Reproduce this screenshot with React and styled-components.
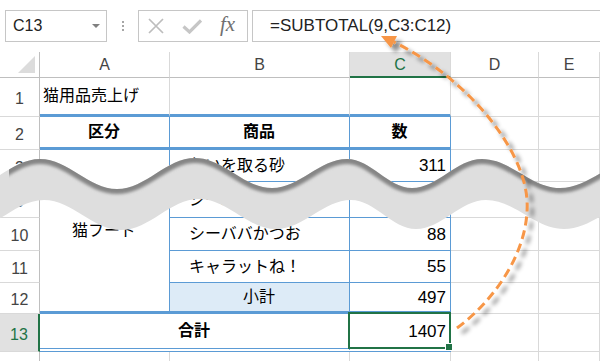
import React from 'react';
import styled, { createGlobalStyle } from 'styled-components';

const Global = createGlobalStyle`
  html, body { margin: 0; padding: 0; background: #fff; }
  body { font-family: "Liberation Sans", "Noto Sans CJK JP", sans-serif; }
`;

const BLUE = '#5b9bd5';
const GRID = '#d9d9d9';
const HEAD_LINE = '#bfbfbf';
const GREEN = '#217346';

const Page = styled.div`
  position: relative;
  width: 600px;
  height: 361px;
  overflow: hidden;
  background: #fff;
`;

const FormulaBar = styled.div`
  display: flex;
  align-items: flex-start;
  height: 52px;
  padding: 10px 0 0 5px;
  box-sizing: border-box;
`;

const NameBox = styled.div`
  display: flex;
  align-items: center;
  width: 102px;
  height: 32px;
  box-sizing: border-box;
  border: 1px solid #c6c6c6;
  padding: 0 6px 0 7px;
  font-size: 16px;
  color: #222;
`;

const DropArrow = styled.span`
  margin-left: auto;
  width: 0;
  height: 0;
  border-left: 4px solid transparent;
  border-right: 4px solid transparent;
  border-top: 4px solid #808080;
`;

const Dots = styled.div`
  width: 31px;
  height: 32px;
  display: flex;
  flex-direction: column;
  align-items: center;
  justify-content: center;
  gap: 2px;
`;

const Dot = styled.span`
  width: 2px;
  height: 2px;
  background: #a6a6a6;
`;

const ButtonBox = styled.div`
  display: flex;
  align-items: center;
  gap: 18px;
  width: 110px;
  height: 32px;
  box-sizing: border-box;
  border: 1px solid #c6c6c6;
  padding-left: 9px;
`;

const Fx = styled.span`
  font-family: "Liberation Serif", serif;
  font-style: italic;
  font-size: 21px;
  color: #707070;
  line-height: 1;
  margin-top: -3px;
`;

const FormulaInput = styled.div`
  flex: 1;
  display: flex;
  align-items: center;
  margin-left: 4px;
  height: 32px;
  box-sizing: border-box;
  border: 1px solid #c6c6c6;
  border-right: none;
  padding-left: 17px;
  font-size: 17px;
  color: #222;
  white-space: nowrap;
`;

const Sheet = styled.div`
  display: grid;
  grid-template-columns: 40px 130px 180px 101px 88px 1fr;
  grid-template-rows: 26px 39px 33px 32px 36px 33px 32px 31px 38px 30px;
`;

const Corner = styled.div`
  position: relative;
  box-sizing: border-box;
  border-right: 1px solid ${HEAD_LINE};
  border-bottom: 1px solid ${HEAD_LINE};
  &::after {
    content: '';
    position: absolute;
    right: 4px;
    bottom: 4px;
    width: 17px;
    height: 17px;
    background: #dcdcdc;
    clip-path: polygon(100% 0, 100% 100%, 0 100%);
  }
`;

const ColHead = styled.div`
  display: flex;
  align-items: center;
  justify-content: center;
  box-sizing: border-box;
  font-size: 16px;
  color: ${p => (p.$sel ? GREEN : '#444')};
  background: ${p => (p.$sel ? '#e1e1e1' : '#fff')};
  border-right: 1px solid ${GRID};
  border-bottom: ${p => (p.$sel ? `2px solid ${GREEN}` : `1px solid ${HEAD_LINE}`)};
  padding-top: ${p => (p.$sel ? '1px' : '0')};
`;

const RowHead = styled.div`
  display: flex;
  align-items: center;
  justify-content: center;
  box-sizing: border-box;
  font-size: 16px;
  padding-top: 4px;
  color: ${p => (p.$sel ? GREEN : '#444')};
  background: ${p => (p.$sel ? '#e1e1e1' : '#fff')};
  border-right: ${p => (p.$sel ? `2px solid ${GREEN}` : `1px solid ${HEAD_LINE}`)};
  border-bottom: 1px solid ${GRID};
`;

const Cell = styled.div`
  position: relative;
  display: flex;
  align-items: center;
  justify-content: ${p => (p.$align === 'right' ? 'flex-end' : p.$align === 'center' ? 'center' : 'flex-start')};
  box-sizing: border-box;
  padding: 0 4px 0 ${p => p.$indent || 3}px;
  font-size: ${p => (p.$num ? 17 : 16)}px;
  font-weight: ${p => (p.$bold ? 700 : 400)};
  line-height: 1;
  color: #000;
  white-space: nowrap;
  background: ${p => p.$fill || 'transparent'};
  border-right: ${p => p.$rb || `1px solid ${GRID}`};
  border-bottom: ${p => p.$bb || `1px solid ${GRID}`};
  grid-column: ${p => (p.$colSpan ? `span ${p.$colSpan}` : 'auto')};
  grid-row: ${p => (p.$rowSpan ? `span ${p.$rowSpan}` : 'auto')};
`;

const Selection = styled.span`
  position: absolute;
  left: -2px;
  top: -2px;
  right: -1px;
  bottom: -1px;
  border: 2px solid ${GREEN};
  pointer-events: none;
  &::after {
    content: '';
    position: absolute;
    right: -4px;
    bottom: -4px;
    width: 6px;
    height: 6px;
    background: ${GREEN};
    border: 1px solid #fff;
  }
`;

const Overlay = styled.svg`
  position: absolute;
  left: 0;
  top: 0;
  width: 600px;
  height: 361px;
  pointer-events: none;
`;

const thinBlue = `1px solid ${BLUE}`;
const thickBlue = `3px solid ${BLUE}`;

function buildCurve(pts) {
  let d = `M${pts[0][0]},${pts[0][1]}`;
  for (let i = 1; i < pts.length; i++) {
    const [x0, y0] = pts[i - 1];
    const [x1, y1] = pts[i];
    const dx = x1 - x0;
    d += ` C${(x0 + 0.37 * dx).toFixed(1)},${y0} ${(x1 - 0.37 * dx).toFixed(1)},${y1} ${x1},${y1}`;
  }
  return d;
}

const topPts = [
  [-37, 189], [40, 159], [117, 189], [195, 158], [272, 188],
  [347, 159], [412, 188], [482, 159], [560, 188], [640, 159],
];
const botPts = topPts.map(([x, y]) => [x + 4, y + 41]).reverse();
const topPath = buildCurve(topPts);
const bandPath =
  topPath +
  ` L${botPts[0][0]},${botPts[0][1]}` +
  buildCurve(botPts).replace(/^M[^ ]+/, '') +
  ' Z';

function Wave() {
  return (
    <g>
      <defs>
        <clipPath id="bandClip">
          <path d={bandPath} />
        </clipPath>
        <clipPath id="edgeStart">
          <rect x="9" y="0" width="620" height="361" />
        </clipPath>
        <filter id="edgeBlur" x="-10%" y="-50%" width="120%" height="200%">
          <feGaussianBlur stdDeviation="1.6" />
        </filter>
        <filter id="arrowShadow" x="-20%" y="-20%" width="150%" height="150%">
          <feDropShadow dx="5" dy="5" stdDeviation="2.2" floodColor="#000" floodOpacity="0.45" />
        </filter>
      </defs>
      <path d={bandPath} fill="#dedede" />
      <g clipPath="url(#bandClip)">
        <g clipPath="url(#edgeStart)">
          <path d={topPath} fill="none" stroke="#858585" strokeWidth="10" filter="url(#edgeBlur)" />
        </g>
      </g>
    </g>
  );
}

function Arrow() {
  return (
    <g filter="url(#arrowShadow)">
      <path
        d="M457,328 C495,300 530,250 527,200 C524,150 470,80 394,42"
        fill="none"
        stroke="#f79646"
        strokeWidth="3"
        strokeDasharray="9 5"
      />
      <polygon points="381,36 397,36 391,48" fill="#f79646" />
    </g>
  );
}

const rows = [
  { n: '1', cells: [
    <Cell key="a" $bb={thickBlue}>猫用品売上げ</Cell>,
    <Cell key="b" $bb={thickBlue} />,
    <Cell key="c" $bb={thickBlue} />,
  ] },
  { n: '2', cells: [
    <Cell key="a" $align="center" $bold $rb={thinBlue} $bb={thickBlue}>区分</Cell>,
    <Cell key="b" $align="center" $bold $rb={thinBlue} $bb={thickBlue}>商品</Cell>,
    <Cell key="c" $align="center" $bold $rb={thinBlue} $bb={thickBlue}>数</Cell>,
  ] },
  { n: '3', cells: [
    <Cell key="a" $rowSpan={5} $align="center" $rb={thinBlue} $bb={thickBlue}>猫フード</Cell>,
    <Cell key="b" $indent={19} $rb={thinBlue} $bb={thinBlue}>匂いを取る砂</Cell>,
    <Cell key="c" $num $align="right" $rb={thinBlue} $bb={thinBlue}>311</Cell>,
  ] },
  { n: '9', cells: [
    <Cell key="b" $indent={19} $rb={thinBlue} $bb={thinBlue}>シーバまぐろ</Cell>,
    <Cell key="c" $num $align="right" $rb={thinBlue} $bb={thinBlue}>102</Cell>,
  ] },
  { n: '10', cells: [
    <Cell key="b" $indent={19} $rb={thinBlue} $bb={thinBlue}>シーババかつお</Cell>,
    <Cell key="c" $num $align="right" $rb={thinBlue} $bb={thinBlue}>88</Cell>,
  ] },
  { n: '11', cells: [
    <Cell key="b" $indent={19} $rb={thinBlue} $bb={thinBlue}>キャラットね！</Cell>,
    <Cell key="c" $num $align="right" $rb={thinBlue} $bb={thinBlue}>55</Cell>,
  ] },
  { n: '12', cells: [
    <Cell key="b" $align="center" $fill="#ddebf7" $rb={thinBlue} $bb={thickBlue}>小計</Cell>,
    <Cell key="c" $num $align="right" $rb={thinBlue} $bb={thickBlue}>497</Cell>,
  ] },
  { n: '13', sel: true, cells: [
    <Cell key="a" $colSpan={2} $align="center" $bold $rb={thinBlue} $bb={`4px double ${BLUE}`}>合計</Cell>,
    <Cell key="c" $num $align="right" $rb={thinBlue} $bb={`4px double ${BLUE}`}>
      1407
      <Selection />
    </Cell>,
  ] },
  { n: '14', cells: [
    <Cell key="a" />,
    <Cell key="b" />,
    <Cell key="c" />,
  ] },
];

export default function App() {
  return (
    <Page>
      <Global />
      <FormulaBar>
        <NameBox>
          C13
          <DropArrow />
        </NameBox>
        <Dots>
          <Dot />
          <Dot />
          <Dot />
        </Dots>
        <ButtonBox>
          <svg width="16" height="16" viewBox="0 0 16 16">
            <path d="M1 1 L15 15 M15 1 L1 15" stroke="#bdbdbd" strokeWidth="1.7" fill="none" />
          </svg>
          <svg width="20" height="15" viewBox="0 0 20 15">
            <path d="M1.5 7.5 L7.5 13 L19 1.5" stroke="#c6c6c6" strokeWidth="3.2" fill="none" />
          </svg>
          <Fx>fx</Fx>
        </ButtonBox>
        <FormulaInput>=SUBTOTAL(9,C3:C12)</FormulaInput>
      </FormulaBar>
      <Sheet>
        <Corner />
        <ColHead>A</ColHead>
        <ColHead>B</ColHead>
        <ColHead $sel>C</ColHead>
        <ColHead>D</ColHead>
        <ColHead>E</ColHead>
        {rows.map(r => (
          <React.Fragment key={r.n}>
            <RowHead $sel={r.sel}>{r.n}</RowHead>
            {r.cells}
            <Cell />
            <Cell />
          </React.Fragment>
        ))}
      </Sheet>
      <Overlay viewBox="0 0 600 361">
        <Wave />
        <Arrow />
      </Overlay>
    </Page>
  );
}
